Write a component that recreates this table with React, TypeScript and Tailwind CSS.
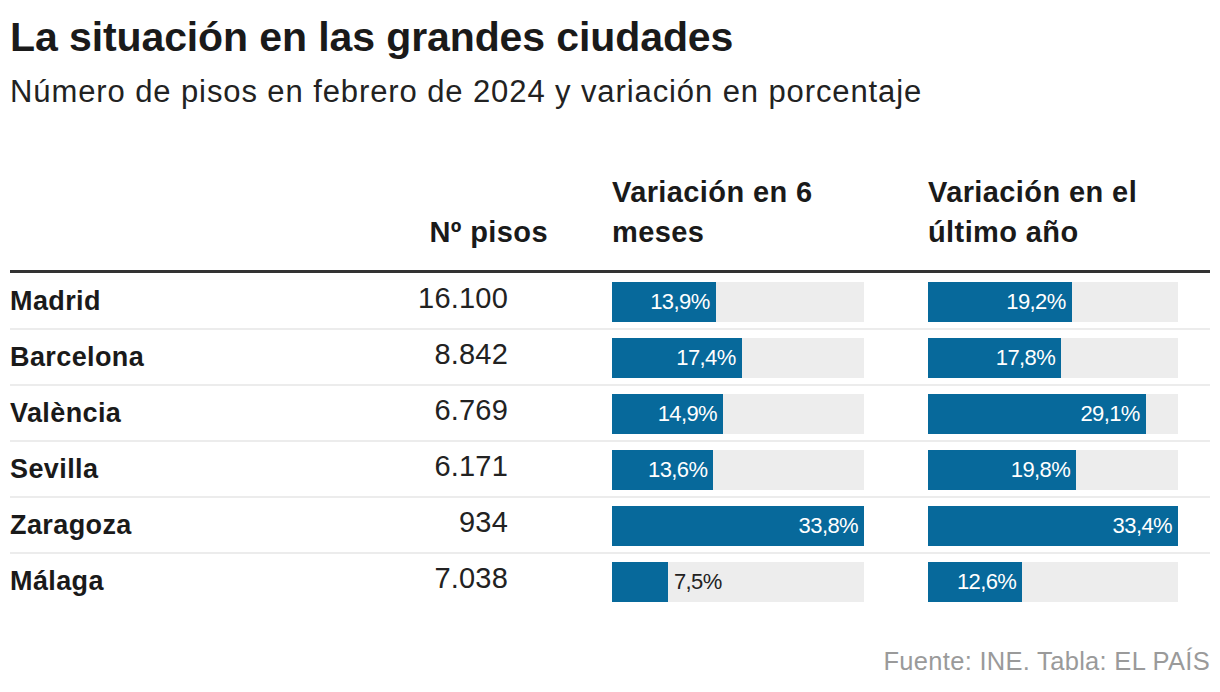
import React from "react";

type Row = { city: string; pisos: string; v6: number; v12: number };

const rows: Row[] = [
  { city: "Madrid", pisos: "16.100", v6: 13.9, v12: 19.2 },
  { city: "Barcelona", pisos: "8.842", v6: 17.4, v12: 17.8 },
  { city: "València", pisos: "6.769", v6: 14.9, v12: 29.1 },
  { city: "Sevilla", pisos: "6.171", v6: 13.6, v12: 19.8 },
  { city: "Zaragoza", pisos: "934", v6: 33.8, v12: 33.4 },
  { city: "Málaga", pisos: "7.038", v6: 7.5, v12: 12.6 },
];

const max6 = Math.max(...rows.map((r) => r.v6));
const max12 = Math.max(...rows.map((r) => r.v12));

const fmt = (v: number) => v.toFixed(1).replace(".", ",") + "%";

function Bar({ value, max, width }: { value: number; max: number; width: number }) {
  const w = (value / max) * width;
  const inside = w >= 70;
  return (
    <div className="relative h-[40px] bg-[#ededed] flex" style={{ width }}>
      <div
        className="h-full bg-[#07699b] flex items-center justify-end pr-[6px]"
        style={{ width: w }}
      >
        {inside && (
          <span className="text-white text-[22px] leading-none tracking-[-0.6px]">
            {fmt(value)}
          </span>
        )}
      </div>
      {!inside && (
        <div className="h-full flex items-center pl-[6px]">
          <span className="text-[#222] text-[22px] leading-none tracking-[-0.6px]">
            {fmt(value)}
          </span>
        </div>
      )}
    </div>
  );
}

export default function App() {
  return (
    <div className="w-[1220px] h-[692px] bg-white px-[10px] pt-[17px] font-['Liberation_Sans',Arial,sans-serif] text-[#1a1a1a] overflow-hidden">
      <h1 className="text-[41px] leading-none font-bold tracking-[-0.1px] text-[#1a1a1a]">
        La situación en las grandes ciudades
      </h1>
      <p className="mt-[18px] text-[31px] leading-none tracking-[0.9px] text-[#222]">
        Número de pisos en febrero de 2024 y variación en porcentaje
      </p>

      <div className="mt-[65px] flex items-end text-[29px] leading-[40px] font-bold tracking-[0.4px] text-[#1a1a1a]">
        <div className="w-[302px]" />
        <div className="w-[236px] text-right">Nº pisos</div>
        <div className="w-[64px]" />
        <div className="w-[316px]">
          Variación en 6
          <br />
          meses
        </div>
        <div className="w-[282px]">
          Variación en el
          <br />
          último año
        </div>
      </div>

      <div className="mt-[18px] border-t-[3px] border-[#333]">
        {rows.map((r, i) => (
          <div
            key={r.city}
            className={
              "flex items-start pb-[6px] " +
              (i === 0 ? "pt-[9px] " : "pt-[8px] ") +
              (i < rows.length - 1 ? "border-b-2 border-[#ececec]" : "")
            }
          >
            <div className="w-[302px] h-[40px] flex items-center pb-[2px] text-[27px] font-bold tracking-[0.4px] text-[#1a1a1a]">
              {r.city}
            </div>
            <div className="w-[236px] h-[40px] flex items-center justify-end pr-[40px] pb-[7px] text-[29px] tracking-[0.2px] text-[#222]">
              {r.pisos}
            </div>
            <div className="w-[64px]" />
            <div className="w-[316px]">
              <Bar value={r.v6} max={max6} width={252} />
            </div>
            <div className="w-[282px]">
              <Bar value={r.v12} max={max12} width={250} />
            </div>
          </div>
        ))}
      </div>

      <div className="mt-[41px] text-right text-[25.5px] leading-none tracking-[0.3px] text-[#9a9a9a]">
        Fuente: INE. Tabla: EL PAÍS
      </div>
    </div>
  );
}
